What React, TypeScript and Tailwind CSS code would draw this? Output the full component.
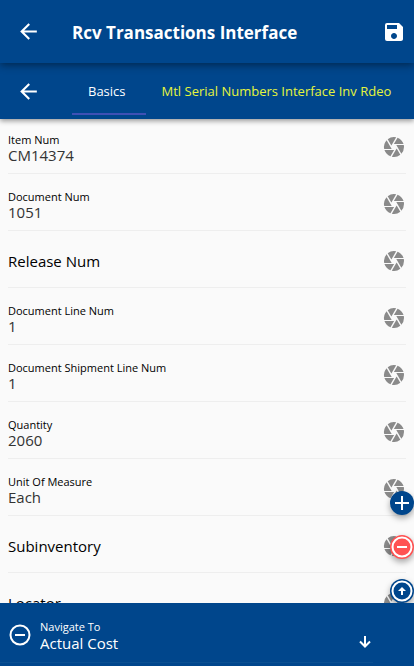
import { MdAdd, MdArrowBack, MdCamera, MdSave } from "react-icons/md";

type Field = { id: string; label: string; value?: string };

const fields: Field[] = [
  { id: "item", label: "Item Num", value: "CM14374" },
  { id: "document", label: "Document Num", value: "1051" },
  { id: "release", label: "Release Num" },
  { id: "line", label: "Document Line Num", value: "1" },
  { id: "shipment", label: "Document Shipment Line Num", value: "1" },
  { id: "quantity", label: "Quantity", value: "2060" },
  { id: "uom", label: "Unit Of Measure", value: "Each" },
  { id: "subinventory", label: "Subinventory" },
  { id: "locator", label: "Locator" },
];

function FieldRow({ field }: { field: Field }) {
  return (
    <li className="flex h-[57px] shrink-0 items-end justify-between border-b border-[#eeeeee] first:h-[55px]">
      <div className="flex min-w-0 flex-1 flex-col pb-2.5">
        {field.value ? (
          <>
            <label htmlFor={field.id} className="text-[11px] leading-[14px] text-black">
              {field.label}
            </label>
            <input
              id={field.id}
              defaultValue={field.value}
              className="h-4 w-full bg-transparent text-[15px] leading-4 text-[#333333] outline-none"
            />
          </>
        ) : (
          <input
            id={field.id}
            aria-label={field.label}
            placeholder={field.label}
            className="mb-1 h-6 w-full bg-transparent text-[15px] text-black outline-none placeholder:text-black placeholder:opacity-100"
          />
        )}
      </div>
      <button type="button" aria-label={`Scan ${field.label}`} className="mb-3.5 text-[#8a8a8a]">
        <MdCamera size={24} />
      </button>
    </li>
  );
}

function RemoveCircle() {
  return (
    <svg viewBox="0 0 24 24" className="size-6" aria-hidden="true">
      <circle cx="12" cy="12" r="9.500" fill="none" stroke="white" strokeWidth="2" />
      <path d="M7 11h10v2H7z" fill="white" />
    </svg>
  );
}

function ArrowUpCircle() {
  return (
    <svg viewBox="0 0 24 24" className="size-6" aria-hidden="true">
      <circle cx="12" cy="12" r="9.500" fill="none" stroke="white" strokeWidth="2" />
      <path d="M11 16v-4H8l4-4 4 4h-3v4z" fill="white" />
    </svg>
  );
}

function ArrowDown() {
  return (
    <svg viewBox="0 0 16 16" className="size-4" aria-hidden="true">
      <path d="M8 2v10.500M3 7.500l5 5 5-5" fill="none" stroke="white" strokeWidth="2" />
    </svg>
  );
}

const fab = "flex size-6 items-center justify-center rounded-full text-white shadow-[0_3px_6px_rgba(0,0,0,0.35)]";

export default function App() {
  return (
    <div className="flex h-screen flex-col overflow-hidden bg-[#fafafa] font-['Open_Sans','Noto_Sans',sans-serif]">
      <header className="z-20 flex h-[63px] shrink-0 items-center bg-[#00468c] px-2 text-white shadow-[0_2px_8px_rgba(0,0,0,0.45)]">
        <button type="button" aria-label="Back" className="ml-2 w-12">
          <MdArrowBack size={25} />
        </button>
        <h1 className="flex-1 pt-0.5 pl-2 text-[17px] leading-6 font-bold">Rcv Transactions Interface</h1>
        <button type="button" aria-label="Save">
          <MdSave size={24} />
        </button>
      </header>

      <nav className="z-10 flex h-14 shrink-0 items-stretch bg-[#00468c] pl-4 text-[13px] text-white shadow-[0_2px_5px_rgba(0,0,0,0.4)]">
        <button type="button" aria-label="Previous page" className="w-14 shrink-0">
          <MdArrowBack size={25} />
        </button>
        <div role="tablist" className="flex min-w-0 flex-1 pb-1">
          <button type="button" role="tab" aria-selected="true" className="min-w-[73px] border-b-2 border-[#3f51b5] pt-2 pr-5 pl-4">
            Basics
          </button>
          <button type="button" role="tab" aria-selected="false" className="px-4 pt-2 pb-0.5 whitespace-nowrap text-[#e6f53c]">
            Mtl Serial Numbers Interface Inv Rdeo
          </button>
        </div>
      </nav>

      <main className="relative min-h-0 flex-1 overflow-hidden">
        <ul className="flex flex-col px-2">
          {fields.map((field) => (
            <FieldRow key={field.id} field={field} />
          ))}
        </ul>
        <div className="absolute right-0 bottom-0 flex flex-col gap-5">
          <button type="button" aria-label="Add" className={`${fab} bg-[#00468c]`}>
            <MdAdd size={24} />
          </button>
          <button type="button" aria-label="Remove" className={`${fab} bg-[#ff5252]`}>
            <RemoveCircle />
          </button>
          <button type="button" aria-label="Scroll to top" className={`${fab} bg-[#00468c]`}>
            <ArrowUpCircle />
          </button>
        </div>
      </main>

      <footer className="h-[63px] shrink-0 bg-[#00468c] text-white">
        <div className="mr-[41px] flex h-[60px] items-center border-b border-[#0a4f90] pt-1 pl-2">
          <button type="button" aria-label="Clear destination" className="w-8 shrink-0">
            <RemoveCircle />
          </button>
          <div className="flex min-w-0 flex-1 flex-col">
            <label htmlFor="destination" className="text-[11px] leading-4">
              Navigate To
            </label>
            <select id="destination" className="h-4 appearance-none bg-transparent text-[15px] leading-4 outline-none">
              <option>Actual Cost</option>
            </select>
          </div>
          <button type="button" aria-label="Go" className="mt-3.5">
            <ArrowDown />
          </button>
        </div>
      </footer>
    </div>
  );
}
